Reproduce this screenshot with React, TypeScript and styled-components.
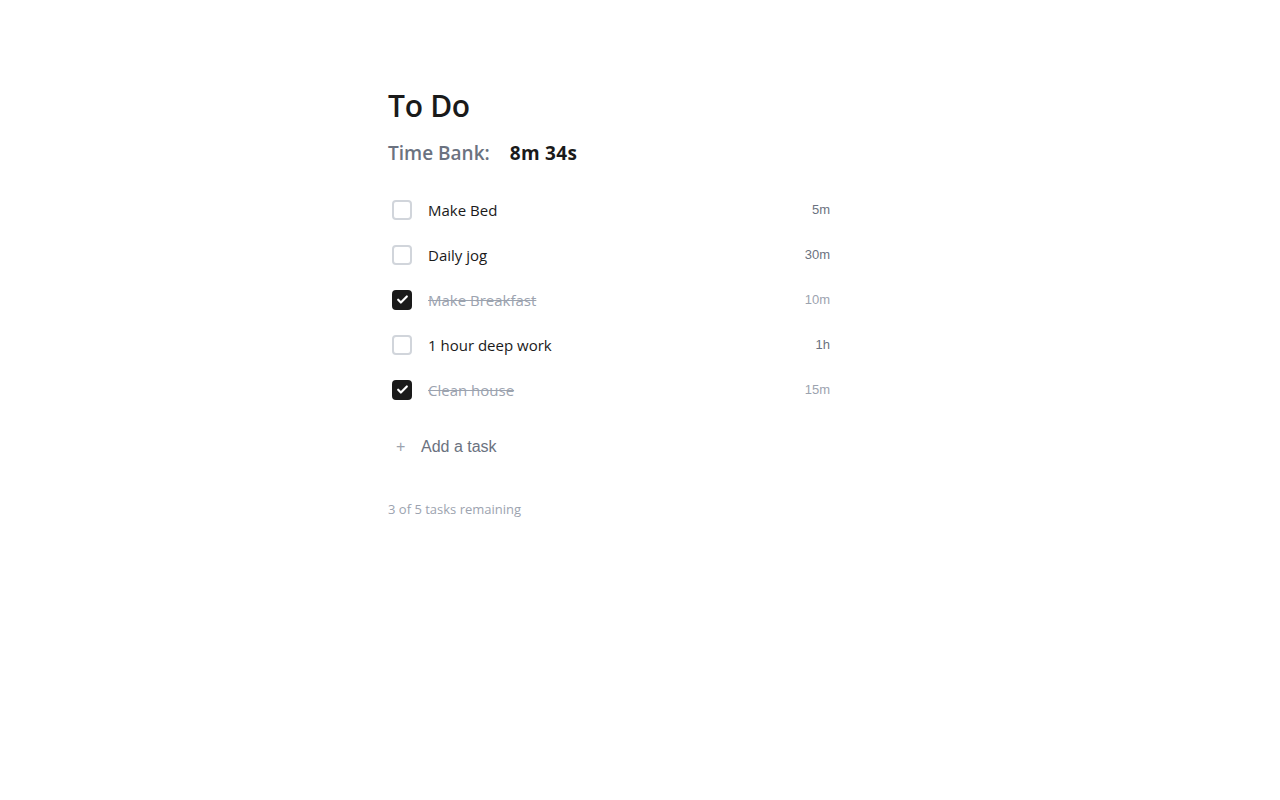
import React from "react";
import styled, { createGlobalStyle } from "styled-components";

const Global = createGlobalStyle`
  html, body { margin: 0; padding: 0; background: #ffffff; }
  body { font-family: "Open Sans", "Noto Sans", sans-serif; color: #1a1a1a; }
`;

const Page = styled.div`
  width: 504px;
  margin: 0 auto;
  padding-top: 84px;
`;

const Title = styled.h1`
  margin: 0;
  font-size: 30px;
  font-weight: 600;
  line-height: 44px;
  color: #1a1a1a;
  letter-spacing: -0.3px;
`;

const Bank = styled.div`
  display: flex;
  align-items: baseline;
  gap: 20px;
  margin-top: 11px;
  font-size: 19px;
  line-height: 28px;
  font-weight: 600;
`;

const BankLabel = styled.span`
  color: #6b7280;
`;

const BankValue = styled.span`
  color: #1a1a1a;
  font-weight: 700;
  letter-spacing: 0.3px;
`;

const List = styled.ul`
  list-style: none;
  margin: 20px 0 0;
  padding: 0;
  width: 448px;
`;

const Row = styled.li`
  display: flex;
  align-items: center;
  height: 45px;
  padding: 0 6px 0 4px;
`;

const Box = styled.span<{ $checked: boolean }>`
  width: 20px;
  height: 20px;
  box-sizing: border-box;
  border-radius: 4px;
  border: 2px solid ${(p) => (p.$checked ? "#1a1a1a" : "#d1d5db")};
  background: ${(p) => (p.$checked ? "#1a1a1a" : "#ffffff")};
  display: flex;
  align-items: center;
  justify-content: center;
  flex-shrink: 0;
`;

const Label = styled.span<{ $done: boolean }>`
  flex: 1;
  margin-left: 16px;
  font-size: 15px;
  color: ${(p) => (p.$done ? "#9ca3af" : "#1a1a1a")};
  text-decoration: ${(p) => (p.$done ? "line-through" : "none")};
`;

const Time = styled.span<{ $done: boolean }>`
  font-family: "Liberation Sans", Arial, sans-serif;
  font-size: 13px;
  color: ${(p) => (p.$done ? "#9ca3af" : "#6b7280")};
`;

const AddRow = styled.div`
  display: flex;
  align-items: center;
  height: 44px;
  margin-top: 13px;
  padding-left: 8px;
  font-family: "Liberation Sans", Arial, sans-serif;
`;

const Plus = styled.span`
  font-size: 16px;
  color: #9ca3af;
  width: 13px;
`;

const AddText = styled.span`
  margin-left: 12px;
  font-size: 16px;
  color: #6b7280;
`;

const Footer = styled.div`
  margin-top: 31px;
  font-size: 13px;
  color: #9ca3af;
`;

const tasks = [
  { name: "Make Bed", time: "5m", done: false },
  { name: "Daily jog", time: "30m", done: false },
  { name: "Make Breakfast", time: "10m", done: true },
  { name: "1 hour deep work", time: "1h", done: false },
  { name: "Clean house", time: "15m", done: true },
];

const Check = () => (
  <svg width="13" height="13" viewBox="0 0 24 24" fill="none" stroke="#fff" strokeWidth="4" strokeLinecap="round" strokeLinejoin="round">
    <path d="M4 12.5l5 5L20 6.5" />
  </svg>
);

export default function App() {
  const remaining = tasks.filter((t) => !t.done).length;
  return (
    <>
      <Global />
      <Page>
        <Title>To Do</Title>
        <Bank>
          <BankLabel>Time Bank:</BankLabel>
          <BankValue>8m 34s</BankValue>
        </Bank>
        <List>
          {tasks.map((t) => (
            <Row key={t.name}>
              <Box $checked={t.done}>{t.done && <Check />}</Box>
              <Label $done={t.done}>{t.name}</Label>
              <Time $done={t.done}>{t.time}</Time>
            </Row>
          ))}
        </List>
        <AddRow>
          <Plus>+</Plus>
          <AddText>Add a task</AddText>
        </AddRow>
        <Footer>
          {remaining} of {tasks.length} tasks remaining
        </Footer>
      </Page>
    </>
  );
}
